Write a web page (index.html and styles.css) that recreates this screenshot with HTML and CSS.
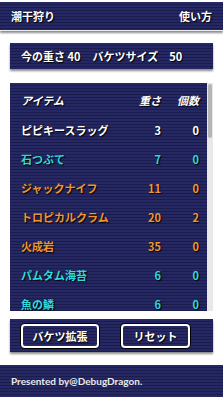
FILE: index.html
```html
<!DOCTYPE html>
<html lang="ja">
<head>
    <meta charset="UTF-8">
    <meta name="viewport" content="width=device-width, initial-scale=1.0">
    <title>潮干狩り</title>
    <link rel="stylesheet" href="styles.css">
</head>
<body>
    <!-- ヘッダー -->
    <div class="header panel">
        <span>潮干狩り</span>
        <span>使い方</span>
    </div>

    <!-- 重さ表示 -->
    <div class="status panel">
        <span>今の重さ 40</span>
        <span>バケツサイズ　50</span>
    </div>

    <!-- アイテム一覧 -->
    <div class="list">
        <div class="list-body panel">
            <table>
                <thead>
                    <tr>
                        <th class="name">アイテム</th>
                        <th class="num">重さ</th>
                        <th class="num">個数</th>
                    </tr>
                </thead>
                <tbody>
                    <tr><td>ピピキースラッグ</td><td class="num">3</td><td class="num">0</td></tr>
                    <tr class="cyan"><td>石つぶて</td><td class="num">7</td><td class="num">0</td></tr>
                    <tr class="orange"><td>ジャックナイフ</td><td class="num">11</td><td class="num">0</td></tr>
                    <tr class="orange"><td>トロピカルクラム</td><td class="num">20</td><td class="num">2</td></tr>
                    <tr class="orange"><td>火成岩</td><td class="num">35</td><td class="num">0</td></tr>
                    <tr class="cyan"><td>パムタム海苔</td><td class="num">6</td><td class="num">0</td></tr>
                    <tr class="cyan"><td>魚の鱗</td><td class="num">6</td><td class="num">0</td></tr>
                </tbody>
            </table>
        </div>
        <div class="scrollbar"><div class="thumb"></div></div>
    </div>

    <!-- ボタン -->
    <div class="buttons panel">
        <button class="btn-wide">バケツ拡張</button>
        <button class="btn-reset">リセット</button>
    </div>

    <!-- フッター -->
    <div class="footer panel">Presented by@DebugDragon.</div>
</body>
</html>
```

FILE: styles.css
```css
body {
    margin: 0;
    background: #fff;
    font-family: "Noto Sans CJK JP", sans-serif;
    color: #fff;
}

.panel {
    background: repeating-linear-gradient(#252862 0 2px, #1a1c4e 2px 3px);
    box-shadow: 0 2px 2px rgba(0, 0, 0, 0.45);
    font-weight: bold;
    text-shadow: 1px 1px 1px #000;
}

.header {
    margin-top: 2px;
    height: 28px;
    padding: 0 11px;
    display: flex;
    justify-content: space-between;
    align-items: center;
    font-size: 11px;
    border-bottom: 1px solid #eee;
}

.status {
    margin: 12px 10px 0;
    height: 26px;
    padding: 0 11px;
    display: flex;
    align-items: center;
    gap: 12px;
    font-size: 11px;
}

/* 一覧 + スクロールバー */
.list {
    margin: 14px 10px 0;
    height: 228px;
    display: flex;
}

.list-body {
    flex: 1;
    overflow: hidden;
    box-shadow: none;
}

.scrollbar {
    width: 6px;
    background: #e8e8e8;
}

.thumb {
    height: 54px;
    margin: 1px 0 0 1px;
    width: 4px;
    border-radius: 2px;
    background: #b5b5b5;
}

table {
    width: 100%;
    border-collapse: collapse;
    font-size: 11px;
    line-height: 1;
}

th {
    height: 31px;
    padding: 2px 0 0;
    font-style: italic;
    text-align: left;
}

td {
    height: 29px;
    padding: 0;
}

th.name, td:first-child {
    padding-left: 11px;
}

.num {
    text-align: right;
    width: 38px;
}

th:last-child, td:last-child {
    padding-right: 8px;
}

.cyan {
    color: #2fd8dc;
}

.orange {
    color: #f0962e;
}

.buttons {
    margin: 8px 10px 0;
    height: 33px;
    padding: 0 11px;
    display: flex;
    align-items: center;
    gap: 22px;
}

button {
    height: 24px;
    background: repeating-linear-gradient(#252862 0 2px, #1a1c4e 2px 3px);
    border: 2px solid #fff;
    border-radius: 4px;
    color: #fff;
    font-family: inherit;
    font-weight: bold;
    font-size: 11px;
    text-shadow: 1px 1px 1px #000;
    box-shadow: 0 0 0 1px #000;
    padding: 0;
}

.btn-wide {
    width: 78px;
}

.btn-reset {
    width: 69px;
}

.footer {
    margin-top: 13px;
    height: 32px;
    padding: 0 11px;
    display: flex;
    align-items: center;
    font-family: Lato, sans-serif;
    font-size: 10px;
    color: #e8e8e8;
    text-shadow: none;
}
```
